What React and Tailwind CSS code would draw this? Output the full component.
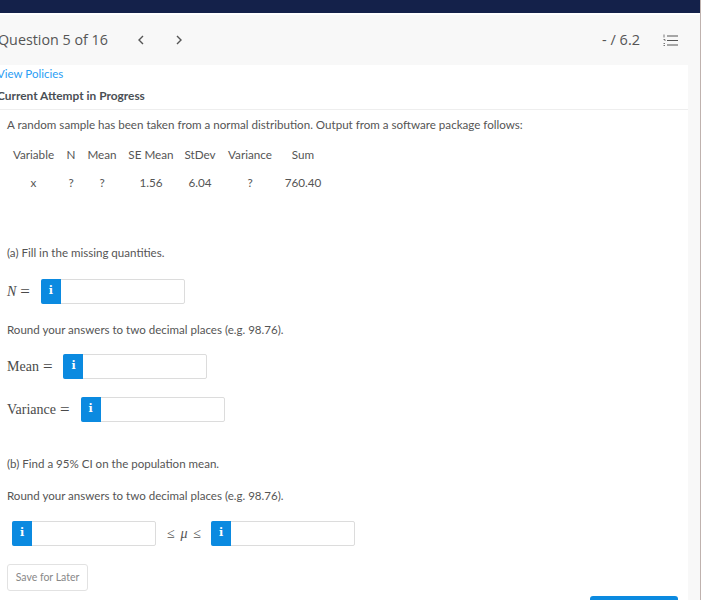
const cols = ["w-[55px]", "w-[20px]", "w-[42px]", "w-[56px]", "w-[42px]", "w-[58px]", "w-[48px]"];
const head = ["Variable", "N", "Mean", "SE Mean", "StDev", "Variance", "Sum"];
const vals = ["x", "?", "?", "1.56", "6.04", "?", "760.40"];

function Row({ cells, className }) {
  return (
    <div className={"flex text-center " + className}>
      {cells.map((c, i) => (
        <div key={i} className={cols[i]}>{c}</div>
      ))}
    </div>
  );
}

function Field() {
  return (
    <div className="flex h-[25px] w-[144px] rounded-[2px] border border-[#dcdcdc] bg-white">
      <div className="-m-px flex h-[25px] w-[20px] shrink-0 items-center justify-center rounded-l-[2px] bg-[#0b8ae0] font-['DejaVu_Serif',serif] text-[11px] font-bold text-white">
        i
      </div>
    </div>
  );
}

function MathLabel({ children }) {
  return (
    <span className="flex items-center gap-[4px] font-['Liberation_Serif',serif] text-[14px] text-[#4a4a4a]">
      {children}
      <span className="text-[17px] leading-[17px]">=</span>
    </span>
  );
}

export default function App() {
  return (
    <div className="flex h-[600px] w-[718px] overflow-hidden bg-white font-['Lato',sans-serif] text-[11.55px] text-[#555]">
      <div className="flex h-[600px] w-[701px] shrink-0 flex-col border-r border-[#bfb2ae] bg-[#f8f8f8]">
        <div className="h-[13px] shrink-0 bg-[#14214a]" />
        <div className="h-[2px] shrink-0 bg-white" />
        <div className="flex h-[50px] shrink-0 items-center pr-[22px]">
          <span className="-ml-[2px] font-['Open_Sans',sans-serif] text-[14.3px] text-[#555]">Question 5 of 16</span>
          <svg className="ml-[29px]" width="8" height="10" viewBox="0 0 8 10" fill="none" stroke="#555" strokeWidth="1.4"><path d="M6 1 2 5l4 4" /></svg>
          <svg className="ml-[30px]" width="8" height="10" viewBox="0 0 8 10" fill="none" stroke="#555" strokeWidth="1.4"><path d="m2 1 4 4-4 4" /></svg>
          <span className="ml-auto font-['Open_Sans',sans-serif] text-[14.5px] text-[#555]">- / 6.2</span>
          <svg className="ml-[23px]" width="15" height="13" viewBox="0 0 15 13" fill="none" stroke="#555">
            <path d="M4 2h11M4 6.500h11M4 11h11" strokeWidth="1.100" />
            <path d="M1 .5v3M.5 5.500h1.500v1.500M.5 9.500h1.500M.5 11.500h1.500" strokeWidth=".8" />
          </svg>
        </div>
        <div className="flex w-[688px] flex-1 flex-col bg-white">
          <a className="-ml-[3px] h-[18px] text-[11.5px] leading-[18px] text-[#2a9df4]">View Policies</a>
          <div className="-ml-[3px] mt-[4px] h-[18px] text-[11.9px] font-bold leading-[18px] text-[#4a4f55]">Current Attempt in Progress</div>
          <div className="mt-[4px] border-t border-[#eeeeee] pl-[7px] pt-[6px]">
            <p className="h-[18px] text-[11.6px] leading-[18px]">A random sample has been taken from a normal distribution. Output from a software package follows:</p>
            <Row className="mt-[11px] h-[18px] -ml-px text-[11.7px] leading-[18px]" cells={head} />
            <Row className="mt-[10px] h-[18px] -ml-px text-[11.7px] leading-[18px]" cells={vals} />
            <p className="mt-[53px] h-[18px] leading-[18px]">(a) Fill in the missing quantities.</p>
            <div className="mt-[17px] flex h-[25px] items-center">
              <MathLabel><i>N</i></MathLabel>
              <div className="ml-[11px]"><Field /></div>
            </div>
            <p className="mt-[17px] h-[18px] leading-[18px]">Round your answers to two decimal places (e.g. 98.76).</p>
            <div className="mt-[15px] flex h-[25px] items-center">
              <MathLabel>Mean</MathLabel>
              <div className="ml-[11px]"><Field /></div>
            </div>
            <div className="mt-[18px] flex h-[25px] items-center">
              <MathLabel>Variance</MathLabel>
              <div className="ml-[11px]"><Field /></div>
            </div>
            <p className="mt-[33px] h-[18px] leading-[18px]">(b) Find a 95% CI on the population mean.</p>
            <p className="mt-[14px] h-[18px] leading-[18px]">Round your answers to two decimal places (e.g. 98.76).</p>
            <div className="mt-[16px] flex h-[25px] items-center pl-[5px]">
              <Field />
              <span className="ml-[11px] flex w-[34px] justify-between font-['Liberation_Serif',serif] text-[14px] text-[#555]">
                <span>≤</span><i>μ</i><span>≤</span>
              </span>
              <div className="ml-[10px]"><Field /></div>
            </div>
            <div className="mt-[18px] flex items-start justify-between pr-[10px]">
              <button className="h-[27px] w-[81px] rounded-[3px] border border-[#e2e2e2] bg-white text-[10.5px] text-[#888]">Save for Later</button>
              <div className="mt-[32px] h-[11px] w-[88px] rounded-t-[3px] bg-[#0b8ae0]" />
            </div>
          </div>
        </div>
      </div>
    </div>
  );
}
